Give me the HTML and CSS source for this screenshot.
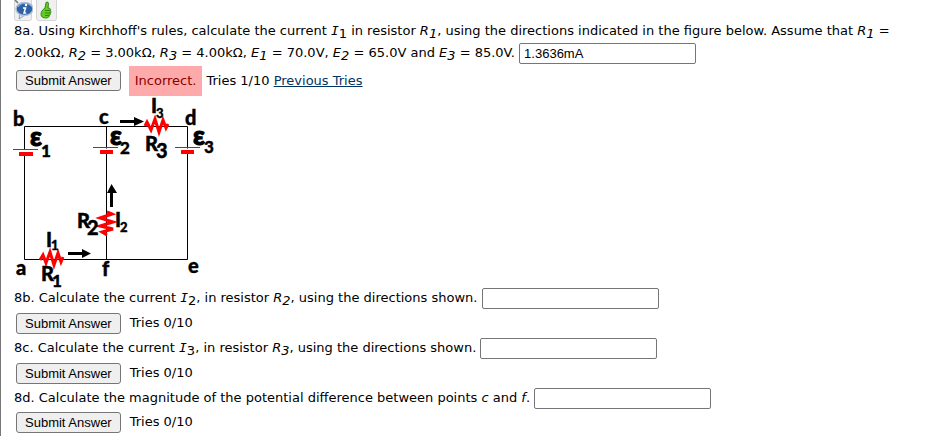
FILE: index.html
```html
<!DOCTYPE html>
<html lang="en">
<head>
  <meta charset="UTF-8">
  <meta name="viewport" content="width=device-width, initial-scale=1.0">
  <title>Kirchhoff's Rules</title>
  <link rel="stylesheet" href="styles.css">
</head>
<body>

  <main class="problem">
    <div class="tools">
      <svg class="tool" width="19" height="21" viewBox="0 0 19 21">
        <rect x="0.5" y="-3" width="17" height="23.500" rx="2" fill="#f0f0f0" stroke="#d4d4d4"/>
        <path d="M1 0l3 3" stroke="#777" stroke-width="1.500"/>
        <path d="M6 13l-1 6 6-4z" fill="#dce6f2" stroke="#6b83a5" stroke-width="0.700"/>
        <ellipse cx="10.500" cy="9" rx="8.500" ry="6.500" fill="#2e62a6" stroke="#b4c4da" stroke-width="1.400"/>
        <path d="M4 7c2-4 10-5 13-1" fill="none" stroke="#7fa5d4" stroke-width="1.200"/>
        <circle cx="12" cy="5" r="1.200" fill="#fff"/>
        <path d="M9 8h2.500l-1.500 5h2.200" fill="none" stroke="#fff" stroke-width="1.500"/>
      </svg>
      <svg class="tool" width="21" height="21" viewBox="0 0 21 21">
        <rect x="0.500" y="-3" width="20" height="23.500" rx="2" fill="#f0f0f0" stroke="#d4d4d4"/>
        <path d="M10 2.500c1.600-1 3 0 2.500 2L12 8c2 0 3 1 2.500 2.500.7 1 .4 2-.2 2.500.4 1-.1 2-.8 2.300-.2 1.700-1.500 2.700-3.500 2.700-3 0-5-1-5-3.500C5 12 6 10 9 8z" fill="#62cc22" stroke="#2f7d12" stroke-width="0.900"/>
        <path d="M9 10.500h5M9 13h5M9 15.500h4" stroke="#2f7d12" stroke-width="0.900"/>
      </svg>
    </div>

    <form class="part">
      <p class="question">
        <label for="ansA">8a. Using Kirchhoff's rules, calculate the current <i class="current">I</i><sub>1</sub> in resistor <i>R<sub>1</sub></i>, using the directions indicated in the figure below. Assume that <i>R<sub>1</sub></i> = 2.00kΩ, <i>R<sub>2</sub></i> = 3.00kΩ, <i>R<sub>3</sub></i> = 4.00kΩ, <i>E<sub>1</sub></i> = 70.0V, <i>E<sub>2</sub></i> = 65.0V and <i>E<sub>3</sub></i> = 85.0V.</label>
        <input id="ansA" class="answer" type="text" value="1.3636mA">
      </p>
      <div class="submit-row graded">
        <button type="button" class="submit">Submit Answer</button>
        <span class="incorrect">Incorrect.</span>
        <span>Tries 1/10 <a href="#">Previous Tries</a></span>
      </div>
    </form>

    <svg class="circuit" width="206" height="190" viewBox="14 96 206 190" role="img" aria-label="Circuit">
      <path class="wire" d="M24.500 125.500H187.500V258.500H24.500zM106.500 125.500V258.500"/>

      <path class="gap" d="M20 150.500h10M102 149h10M183 149h10"/>
      <path class="plate" d="M13 148.500h25M93 146.500h25M175 146.500h25"/>
      <path class="plate thick" d="M19 153h14M100 151h13M181 151h13"/>

      <path class="zig" d="M145 125l2-4 4 8 4-11 4 13 4-12 3 8 2-4"/>
      <path class="zig" d="M40 259l3-5 3 8 4-11 4 13 4-12 3 9 2-5"/>
      <path class="zig" d="M107 211l5 2-12 4 13 4-13 4 13 3-11 3 5 3"/>

      <path class="arrow" d="M120 120.500h16M68 252.500h16M111.500 206v-16"/>
      <path d="M134 116v9l10-4.500zM82 248v9l9-4.500zM107 192h10l-5.500-9z"/>

      <g class="names">
        <text x="13" y="125">b</text>
        <text x="99" y="123">c</text>
        <text x="185" y="124">d</text>
        <text x="16" y="274">a</text>
        <text x="102" y="275">f</text>
        <text x="188" y="272">e</text>
      </g>
      <g class="symbols">
        <text x="30" y="145" class="emf">ε</text>
        <text x="110" y="144" class="emf">ε</text>
        <text x="193" y="144" class="emf">ε</text>
        <text x="145" y="150">R</text>
        <text x="77" y="227">R</text>
        <text x="41" y="280">R</text>
        <text x="151" y="112">I</text>
        <text x="115" y="226">I</text>
        <text x="46" y="246">I</text>
      </g>
      <g class="subs">
        <text x="41" y="156">1</text>
        <text x="120" y="153">2</text>
        <text x="204" y="152">3</text>
        <text x="156" y="157" class="big">3</text>
        <text x="87" y="234" class="big">2</text>
        <text x="52" y="286">1</text>
        <text x="156" y="117" class="small">3</text>
        <text x="120" y="231" class="small">2</text>
        <text x="51" y="249" class="small">1</text>
      </g>
    </svg>

    <form class="part">
      <p class="question">
        <label for="ansB">8b. Calculate the current <i class="current">I</i><sub>2</sub>, in resistor <i>R<sub>2</sub></i>, using the directions shown.</label>
        <input id="ansB" class="answer" type="text">
      </p>
      <div class="submit-row">
        <button type="button" class="submit">Submit Answer</button>
        <span>Tries 0/10</span>
      </div>
    </form>

    <form class="part">
      <p class="question">
        <label for="ansC">8c. Calculate the current <i class="current">I</i><sub>3</sub>, in resistor <i>R<sub>3</sub></i>, using the directions shown.</label>
        <input id="ansC" class="answer" type="text">
      </p>
      <div class="submit-row">
        <button type="button" class="submit">Submit Answer</button>
        <span>Tries 0/10</span>
      </div>
    </form>

    <form class="part">
      <p class="question">
        <label for="ansD">8d. Calculate the magnitude of the potential difference between points <i>c</i> and <i>f</i>.</label>
        <input id="ansD" class="answer" type="text">
      </p>
      <div class="submit-row last">
        <button type="button" class="submit">Submit Answer</button>
        <span>Tries 0/10</span>
      </div>
    </form>
  </main>

</body>
</html>
```

FILE: styles.css
```css
body {
  margin: 0;
  background: #fff;
  color: #000;
  font-family: Verdana, "DejaVu Sans", sans-serif;
  font-size: 13px;
  line-height: 22px;
}

.problem {
  box-sizing: border-box;
  min-height: 100vh;
  border-left: 1px solid #777;
  padding: 0 13px;
}

.tools {
  display: flex;
  gap: 3px;
  height: 20px;
}

.question {
  margin: 0;
}

.question sub {
  font-size: 13px;
  line-height: 0;
  vertical-align: -3px;
}

/* serifed capital I for the currents */
.current {
  font-family: "DejaVu Sans Mono", monospace;
  line-height: 0;
}

.answer {
  box-sizing: border-box;
  width: 177px;
  height: 21px;
  margin: 0;
  padding: 1px 4px;
  border: 1px solid #767676;
  border-radius: 2px;
  background: #fff;
  font-family: Arial, "Liberation Sans", sans-serif;
  font-size: 13px;
  vertical-align: middle;
}

.submit-row {
  display: flex;
  align-items: center;
  gap: 9px;
  height: 28px;
  padding-left: 2px;
}

.submit-row.graded {
  height: 33px;
  gap: 8px;
}

.submit-row.graded span + span {
  margin-left: -4px;
}

.submit-row.last {
  height: 26px;
}

.submit {
  height: 21px;
  padding: 0 8px;
  border: 1px solid #767676;
  border-radius: 3px;
  background: #efefef;
  color: #000;
  font-family: Arial, "Liberation Sans", sans-serif;
  font-size: 13px;
}

.incorrect {
  padding: 4px 6px;
  background: #ffaaaa;
  color: #880000;
}

a {
  color: #003366;
}

.circuit {
  display: block;
  overflow: visible;
}

.wire {
  fill: none;
  stroke: #000;
  stroke-width: 1;
}

.gap {
  stroke: #fff;
  stroke-width: 3;
}

.plate {
  stroke: #f00;
  stroke-width: 1;
}

.plate.thick {
  stroke-width: 4;
}

.zig {
  fill: none;
  stroke: #f00;
  stroke-width: 3;
}

.arrow {
  stroke: #000;
  stroke-width: 3;
}

.circuit text {
  font-family: Lato, "DejaVu Sans", sans-serif;
  font-weight: 900;
  stroke: #000;
  stroke-width: 0.4px;
}

.names text {
  font-size: 20px;
}

.symbols text {
  font-size: 20px;
}

.symbols .emf {
  font-size: 26px;
  stroke-width: 1px;
}

.subs text {
  font-size: 17px;
}

.subs .big {
  font-size: 20px;
}

.subs .small {
  font-size: 13px;
}
```
